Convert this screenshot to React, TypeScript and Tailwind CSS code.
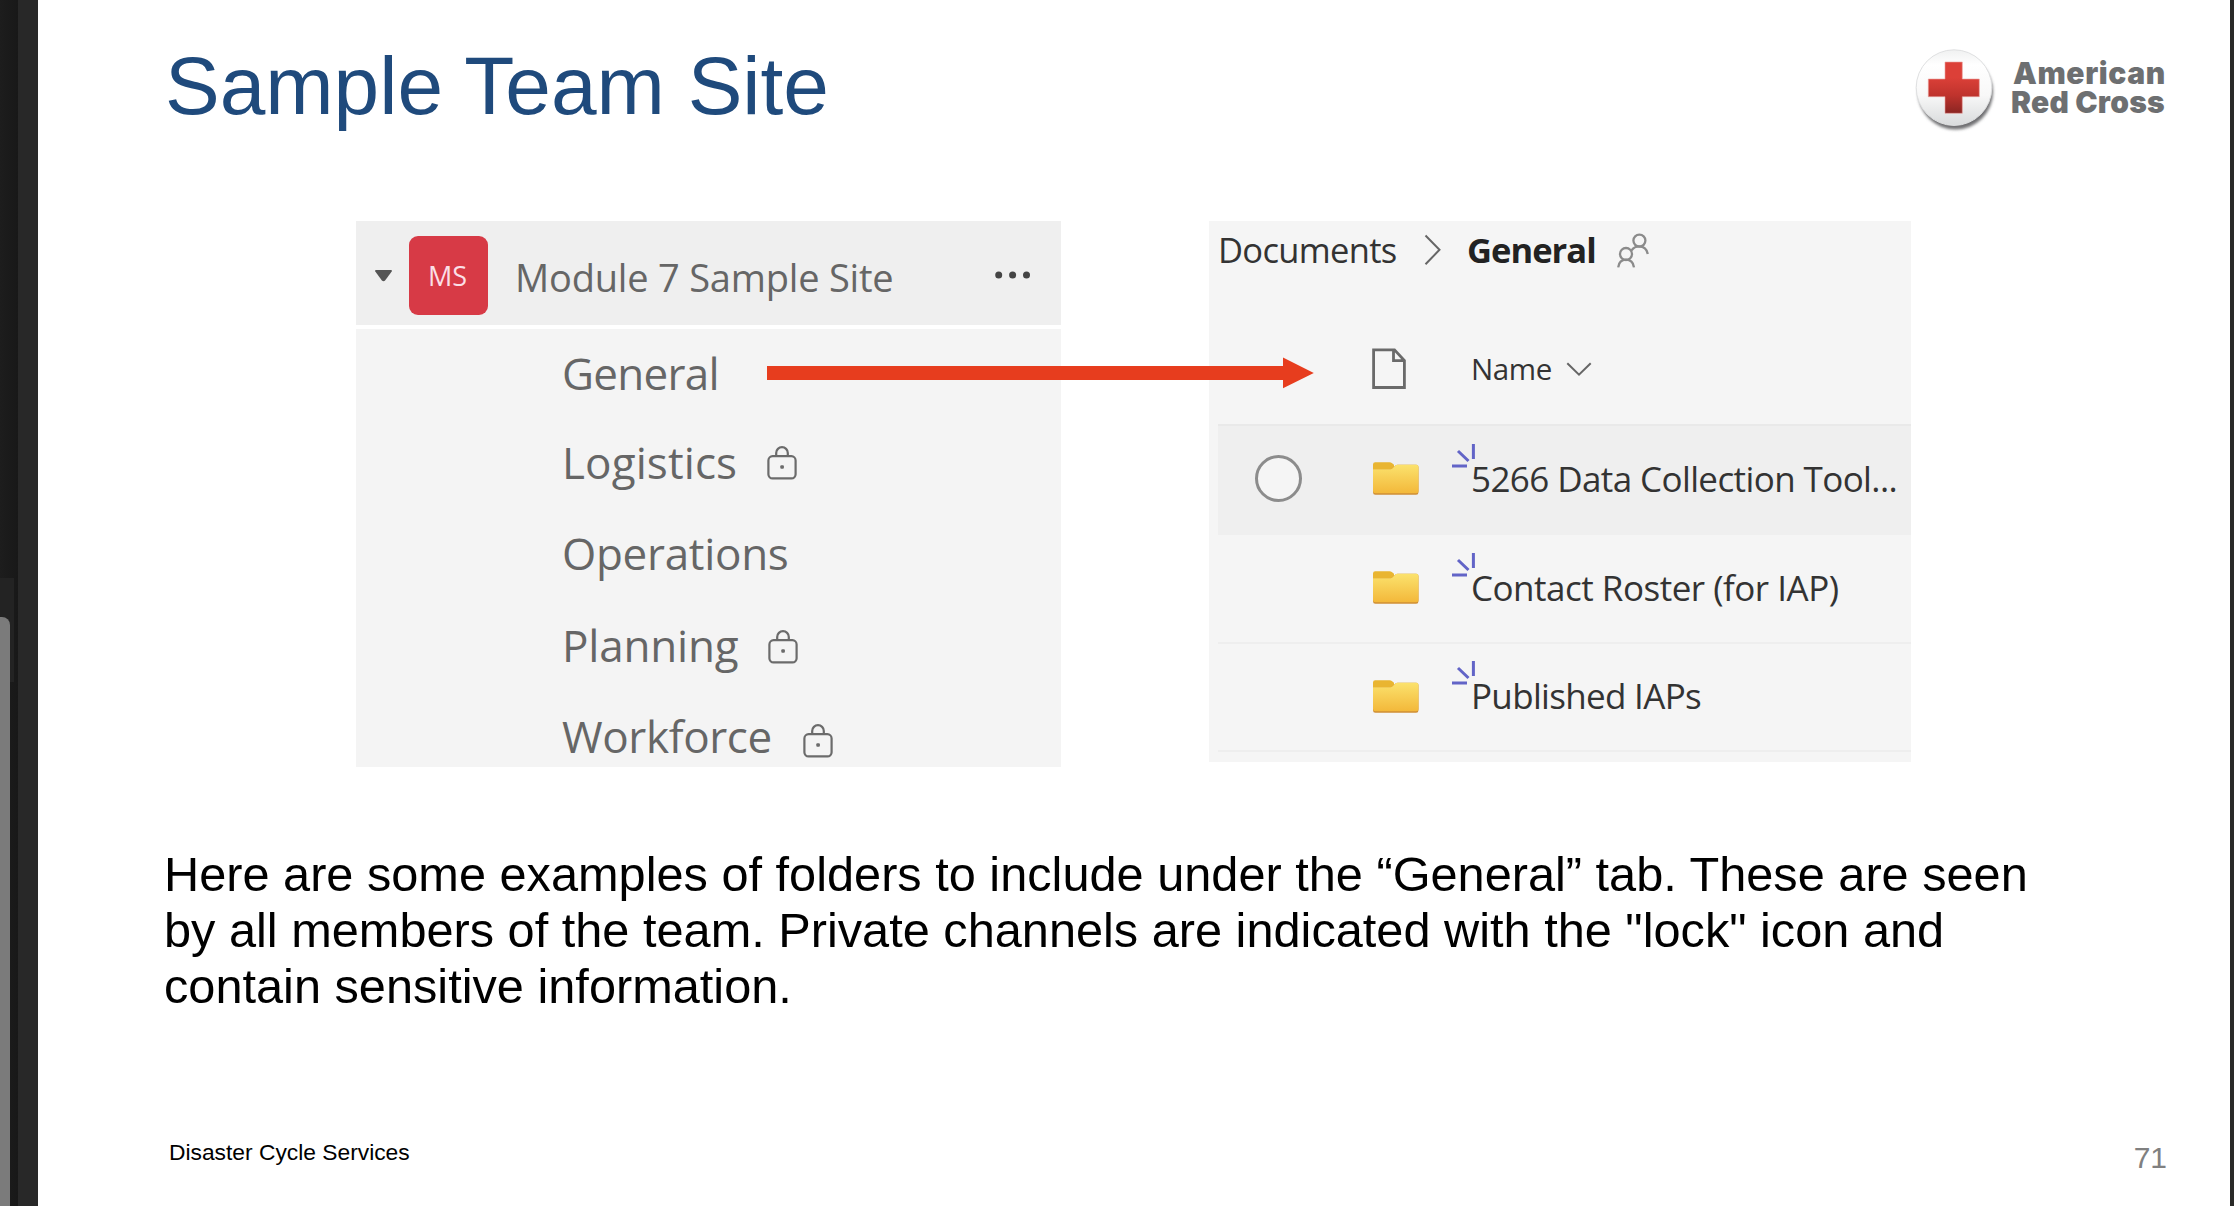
import React from 'react';

function LockIcon({ className }: { className: string }) {
  return (
    <svg viewBox="0 0 30 34" className={`h-[34px] w-[30px] shrink-0 ${className}`} fill="none" stroke="#6b6b6b" strokeWidth="2.2">
      <rect x="1.4" y="10.2" width="27.2" height="22.2" rx="4.2" />
      <path d="M9.2 10V7a5.8 5.8 0 0 1 11.600 0v3" />
      <rect x="13.300" y="19.200" width="3.600" height="3.600" rx="1" fill="#6b6b6b" stroke="none" />
    </svg>
  );
}

function FolderIcon() {
  return (
    <svg viewBox="0 0 46 33" className="h-[33px] w-[46px] shrink-0">
      <defs>
        <linearGradient id="folder" x1="0" y1="0" x2="0" y2="1">
          <stop offset="0" stopColor="#fbe26d" />
          <stop offset="1" stopColor="#f3b83a" />
        </linearGradient>
      </defs>
      <path d="M0 2.500Q0 .3 2.200.3H16.500q1.500 0 2.600 1L21 2.800V9H0z" fill="#e9b531" />
      <path d="M0 7.200H17.500q1.200 0 2.100-.9L22.200 3.800q1-1 2.400-1H43.200Q45.500 2.800 45.500 5V30.200q0 2.500-2.400 2.500H2.400Q0 32.700 0 30.200z" fill="#cf8f35" />
      <path d="M0 7.200H17.500q1.200 0 2.100-.9L22.200 3.800q1-1 2.400-1H43.200Q45.500 2.800 45.500 5V29q0 2.300-2.400 2.300H2.400Q0 31.300 0 29z" fill="url(#folder)" />
    </svg>
  );
}

function Sparkle() {
  return (
    <svg viewBox="0 0 26 26" className="absolute -left-[20px] -top-[12px] h-[26px] w-[26px]" fill="none" stroke="#6264c7" strokeWidth="3">
      <path d="M22.400 1v15M7 8l10.500 10M1 23h15" />
    </svg>
  );
}

const channels = [
  { name: 'General', row: 'h-[87px]', text: 'tracking-[-0.7px]' },
  { name: 'Logistics', row: 'h-[92px]', text: 'tracking-[0.1px]', lock: 'ml-[30px] mt-[2px]' },
  { name: 'Operations', row: 'h-[90px]', text: 'tracking-[-0.3px]' },
  { name: 'Planning', row: 'h-[94px]', text: 'tracking-[-0.2px]', lock: 'ml-[30px] mt-[4px]' },
  { name: 'Workforce', row: 'h-[88px]', text: 'tracking-[-0.37px]', lock: 'ml-[31px] mt-[9px]' },
];

const folders = [
  { name: '5266 Data Collection Tool...', row: 'h-[109px] bg-[#efefef] border-[#e9e9e9]', text: 'tracking-[-0.6px]', selectable: true },
  { name: 'Contact Roster (for IAP)', row: 'h-[109px] border-[#efefef]', text: 'tracking-[-0.5px]' },
  { name: 'Published IAPs', row: 'h-[108px] border-[#eeeeee]', text: 'tracking-[-0.68px]' },
];

function ViewerChrome() {
  return (
    <div className="flex w-[38px] shrink-0 bg-[#282828]">
      <div className="relative w-[18px] bg-linear-to-r from-[#1d1d1d] to-[#181818]">
        <div className="absolute left-0 top-[578px] h-[104px] w-[14px] bg-[#232323]" />
        <div className="absolute bottom-0 left-0 top-[617px] w-[10px] rounded-tr-[8px] bg-[#7b7b7b]" />
      </div>
    </div>
  );
}

function Logo() {
  return (
    <div className="mr-[66px] flex">
      <svg viewBox="0 0 90 90" className="mt-[44px] h-[90px] w-[90px]">
        <defs>
          <linearGradient id="button" x1="0" y1="0" x2="0" y2="1">
            <stop offset="0" stopColor="#f0f1f1" />
            <stop offset="0.2" stopColor="#ffffff" />
            <stop offset="0.6" stopColor="#f8f8f8" />
            <stop offset="1" stopColor="#d9dbdc" />
          </linearGradient>
          <linearGradient id="cross" x1="0" y1="0" x2="0" y2="1">
            <stop offset="0.3" stopColor="#dc4038" />
            <stop offset="0.65" stopColor="#bf332d" />
            <stop offset="1" stopColor="#8a2522" />
          </linearGradient>
          <filter id="soft" x="-20%" y="-20%" width="140%" height="140%">
            <feGaussianBlur stdDeviation="1.800" />
          </filter>
        </defs>
        <circle cx="45.500" cy="48" r="37.500" fill="#6f7072" filter="url(#soft)" />
        <circle cx="44" cy="43.600" r="37.800" fill="url(#button)" stroke="#dfe0e1" strokeWidth="1" />
        <path d="M35 18h17.300v17h17v17.700h-17v16.600H35V52.700H18.300V35H35z" fill="url(#cross)" stroke="#e9a29e" strokeWidth="0.600" />
      </svg>
      <div className="ml-[11px] mt-[59px] w-[153px] whitespace-nowrap font-['Inter'] text-[30px] font-black leading-[29.400px] text-[#6d6f71]">
        <div className="ml-[2px] tracking-[0.6px]">American</div>
        <div className="tracking-[0.23px]">Red Cross</div>
      </div>
    </div>
  );
}

function ChannelPanel() {
  return (
    <div className="h-[546px] w-[705px] text-[#666666]">
      <div className="flex h-[104px] items-center bg-[#efefef] pl-[18px] pt-[4px]">
        <svg viewBox="0 0 19 13" className="h-[13px] w-[19px]">
          <path d="M1.800 1h15.400q1.200.3.5 1.500l-6.600 9q-1.600 1.400-3.200 0l-6.600-9Q.6 1.300 1.800 1z" fill="#555555" />
        </svg>
        <div className="ml-[16px] flex h-[79px] w-[79px] items-center rounded-[9px] bg-[#d73a46] pl-[19px] text-[27px] leading-none text-[#fbdfe6]">
          MS
        </div>
        <div className="ml-[27px] w-[480px] pt-[3px] text-[38px] leading-[52px] tracking-[-0.2px]">Module 7 Sample Site</div>
        <svg viewBox="0 0 36 8" className="h-[8px] w-[36px]" fill="#444444">
          <circle cx="3.700" cy="4" r="3.500" />
          <circle cx="17.600" cy="4" r="3.500" />
          <circle cx="31.500" cy="4" r="3.500" />
        </svg>
      </div>
      <div className="mt-[4px] h-[438px] w-[705px] overflow-hidden bg-[#f4f4f4]">
        {channels.map((c) => (
          <div key={c.name} className={`flex items-center pl-[206px] text-[44px] leading-[60px] ${c.row}`}>
            <span className={c.text}>{c.name}</span>
            {c.lock && <LockIcon className={c.lock} />}
          </div>
        ))}
      </div>
    </div>
  );
}

function DocumentsPanel() {
  return (
    <div className="ml-[148px] h-[541px] w-[702px] bg-[#f5f5f5] text-[#333333]">
      <div className="flex h-[57px] items-center pl-[9px] text-[34.500px] leading-[48px]">
        <span className="w-[206px] tracking-[-0.68px]">Documents</span>
        <svg viewBox="0 0 18 32" className="h-[32px] w-[18px]" fill="none" stroke="#666666" strokeWidth="2">
          <path d="M1.500 1.500 15.500 15.800 1.500 30.300" />
        </svg>
        <span className="ml-[25px] w-[150px] font-bold tracking-[-0.95px] text-[#222222]">General</span>
        <svg viewBox="0 0 33 35" className="mt-[2px] h-[35px] w-[33px]" fill="none" stroke="#8b8b8b" strokeWidth="2.300">
          <circle cx="22.400" cy="7.600" r="6" />
          <circle cx="9" cy="21" r="6" />
          <path d="M1.200 34.300c.6-4.800 3.600-7.600 7.800-7.600s7.300 2.800 8 7.600M14.600 17.300c1.700-2.600 4.400-4 7.600-4 4.400 0 7.600 2.700 8.600 7.600" />
        </svg>
      </div>
      <div className="flex h-[146px] items-center pl-[163px] pt-[36px]">
        <svg viewBox="0 0 35 42" className="h-[42px] w-[35px]" fill="none" stroke="#6a6a6a" strokeWidth="2.800">
          <path d="M1.600 1.800H22.500L32.400 12.500V39.500H1.600zM21.500 1.800V12.600H32.400" />
        </svg>
        <span className="ml-[64px] w-[95px] text-[29.500px] leading-[40px] tracking-[-0.37px]">Name</span>
        <svg viewBox="0 0 26 14" className="h-[14px] w-[26px]" fill="none" stroke="#666666" strokeWidth="2">
          <path d="M1.300 1.200 13 12.600 24.700 1.200" />
        </svg>
      </div>
      <div className="ml-[9px] border-b-2 border-[#eeeeee]">
        {folders.map((f) => (
          <div key={f.name} className={`flex items-center border-t-2 pb-[2px] ${f.row}`}>
            <div className="flex w-[155px] pl-[37px]">
              {f.selectable && <div className="size-[47px] rounded-full border-[3px] border-[#8c8c8c] bg-[#f5f5f5]" />}
            </div>
            <FolderIcon />
            <div className="relative ml-[52px] whitespace-nowrap text-[35px] leading-[48px]">
              <Sparkle />
              <span className={f.text}>{f.name}</span>
            </div>
          </div>
        ))}
      </div>
    </div>
  );
}

export default function App() {
  return (
    <div className="flex h-[1206px] w-[2234px] overflow-hidden bg-white font-['Liberation_Sans',sans-serif]">
      <ViewerChrome />
      <main className="flex w-[2192px] shrink-0 flex-col bg-white">
        <header className="flex h-[221px] justify-between pl-[127px]">
          <h1 className="mt-[41px] h-[90px] text-[82px] leading-[90px] text-[#1f4a7c]">Sample Team Site</h1>
          <Logo />
        </header>
        <section className="relative flex h-[546px] pl-[318px] font-['Open_Sans',sans-serif]">
          <ChannelPanel />
          <DocumentsPanel />
          <svg viewBox="0 0 547 32" className="absolute left-[729px] top-[136px] h-[32px] w-[547px]">
            <path d="M0 9H516V.5L546.800 15.900 516 31.300V22.900H0z" fill="#e73d1e" />
          </svg>
        </section>
        <p className="mt-[79px] whitespace-nowrap pl-[126px] text-[48.700px] leading-[56px] text-black">
          Here are some examples of folders to include under the “General” tab. These are seen
          <br />
          by all members of the team. Private channels are indicated with the "lock" icon and
          <br />
          contain sensitive information.
        </p>
        <footer className="mt-[122px] flex justify-between pl-[131px] pr-[63px]">
          <span className="text-[22.800px] leading-[32px] text-black">Disaster Cycle Services</span>
          <span className="mt-[6px] text-[30px] leading-[32px] text-[#808080]">71</span>
        </footer>
      </main>
      <div className="w-[4px] bg-[#2a2a28]" />
    </div>
  );
}
